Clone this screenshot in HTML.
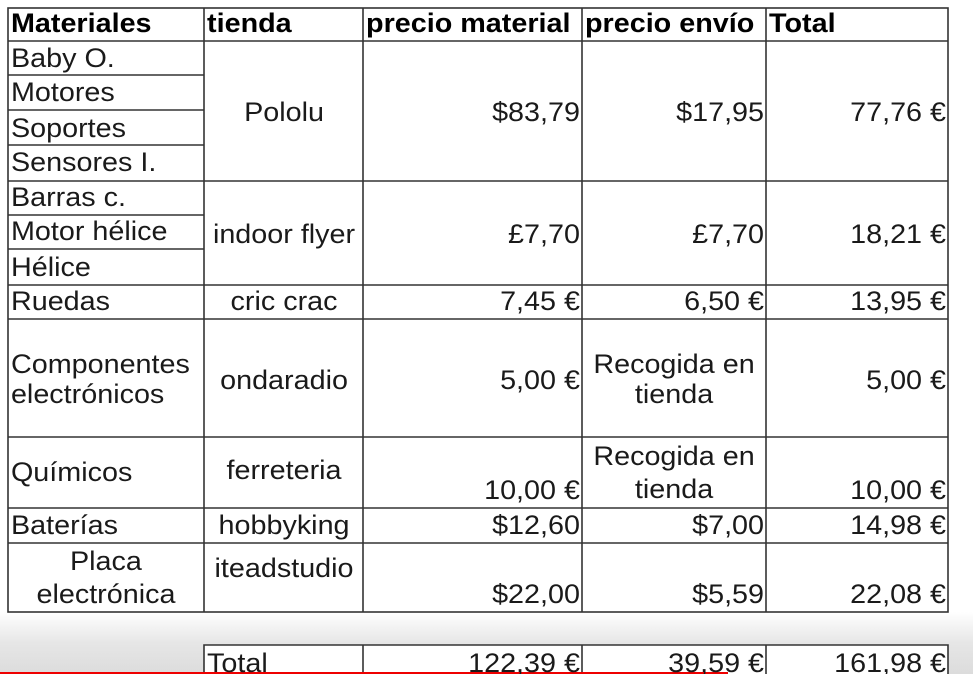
<!DOCTYPE html>
<html><head><meta charset="utf-8"><style>
html,body{margin:0;padding:0;width:973px;height:674px;overflow:hidden;background:#fff}
svg{display:block}
text{font-family:"Liberation Sans",Arial,sans-serif;font-size:27px;fill:#1a1a1a}
.b{font-weight:bold;fill:#000}
</style></head><body>
<svg width="973" height="674" viewBox="0 0 973 674">
<defs><linearGradient id="g" x1="0" y1="0" x2="0" y2="1">
<stop offset="0" stop-color="#ffffff"/><stop offset="0.5" stop-color="#e6e6e6"/><stop offset="1" stop-color="#dcdcdc"/></linearGradient></defs>
<rect x="0" y="612" width="973" height="62" fill="url(#g)"/>
<rect x="204" y="645" width="744" height="29" fill="#fff"/>
<g stroke="#333" stroke-width="1.6" fill="none">
<rect x="8" y="8" width="940" height="604"/>
<line x1="8" y1="41" x2="948" y2="41"/>
<line x1="8" y1="75" x2="204" y2="75"/>
<line x1="8" y1="110" x2="204" y2="110"/>
<line x1="8" y1="145" x2="204" y2="145"/>
<line x1="8" y1="181" x2="948" y2="181"/>
<line x1="8" y1="215" x2="204" y2="215"/>
<line x1="8" y1="249" x2="204" y2="249"/>
<line x1="8" y1="285" x2="948" y2="285"/>
<line x1="8" y1="319" x2="948" y2="319"/>
<line x1="8" y1="437" x2="948" y2="437"/>
<line x1="8" y1="508" x2="948" y2="508"/>
<line x1="8" y1="543" x2="948" y2="543"/>
<line x1="204" y1="8" x2="204" y2="612"/>
<line x1="363" y1="8" x2="363" y2="612"/>
<line x1="582" y1="8" x2="582" y2="612"/>
<line x1="766" y1="8" x2="766" y2="612"/>
<polyline points="204,674 204,645 948,645 948,674"/>
<line x1="363" y1="645" x2="363" y2="674"/>
<line x1="582" y1="645" x2="582" y2="674"/>
<line x1="766" y1="645" x2="766" y2="674"/>
</g>
<line x1="0" y1="673" x2="728" y2="673" stroke="#e00" stroke-width="2"/>
<g transform="scale(1.065,1)">
<text class="b" x="10.3" y="32">Materiales</text>
<text class="b" x="194.4" y="32">tienda</text>
<text class="b" x="343.7" y="32">precio material</text>
<text class="b" x="549.3" y="32">precio envío</text>
<text class="b" x="722.1" y="32">Total</text>
<text x="10.3" y="67">Baby O.</text>
<text x="10.3" y="101">Motores</text>
<text x="10.3" y="137">Soportes</text>
<text x="10.3" y="171">Sensores I.</text>
<text x="10.3" y="206">Barras c.</text>
<text x="10.3" y="240">Motor hélice</text>
<text x="10.3" y="276">Hélice</text>
<text x="10.3" y="310">Ruedas</text>
<text x="10.3" y="373">Componentes</text>
<text x="10.3" y="403">electrónicos</text>
<text x="10.3" y="481">Químicos</text>
<text x="10.3" y="534">Baterías</text>
<g text-anchor="middle">
<text x="99.5" y="570">Placa</text>
<text x="99.5" y="603">electrónica</text>
<text x="266.7" y="121">Pololu</text>
<text x="266.7" y="243">indoor flyer</text>
<text x="266.7" y="310">cric crac</text>
<text x="266.7" y="389">ondaradio</text>
<text x="266.7" y="479">ferreteria</text>
<text x="266.7" y="534">hobbyking</text>
<text x="266.7" y="577">iteadstudio</text>
<text x="632.9" y="373">Recogida en</text>
<text x="632.9" y="403">tienda</text>
<text x="632.9" y="465">Recogida en</text>
<text x="632.9" y="498">tienda</text>
</g>
<g text-anchor="end">
<text x="544.6" y="121">$83,79</text>
<text x="544.6" y="243">£7,70</text>
<text x="544.6" y="310">7,45 €</text>
<text x="544.6" y="389">5,00 €</text>
<text x="544.6" y="499">10,00 €</text>
<text x="544.6" y="534">$12,60</text>
<text x="544.6" y="603">$22,00</text>
<text x="717.4" y="121">$17,95</text>
<text x="717.4" y="243">£7,70</text>
<text x="717.4" y="310">6,50 €</text>
<text x="717.4" y="534">$7,00</text>
<text x="717.4" y="603">$5,59</text>
<text x="888.3" y="121">77,76 €</text>
<text x="888.3" y="243">18,21 €</text>
<text x="888.3" y="310">13,95 €</text>
<text x="888.3" y="389">5,00 €</text>
<text x="888.3" y="499">10,00 €</text>
<text x="888.3" y="534">14,98 €</text>
<text x="888.3" y="603">22,08 €</text>
<text x="544.6" y="672">122,39 €</text>
<text x="717.4" y="672">39,59 €</text>
<text x="888.3" y="672">161,98 €</text>
</g>
<text x="194.4" y="672">Total</text>
</g>
</svg>
</body></html>
